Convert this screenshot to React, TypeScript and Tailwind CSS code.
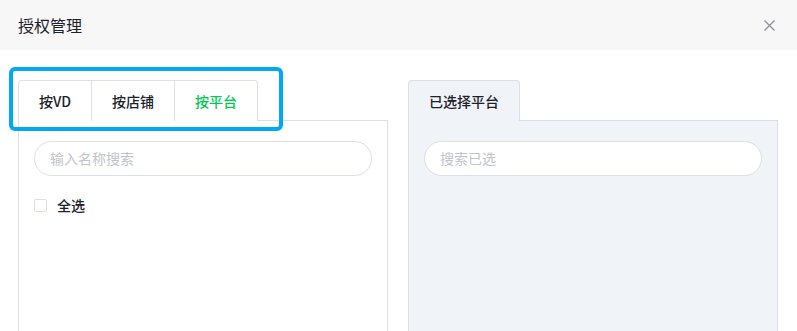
import React from "react";

export default function App() {
  const font = { fontFamily: '"Noto Sans CJK SC", "Noto Sans", sans-serif' };
  return (
    <div className="relative h-[331px] w-[797px] overflow-hidden bg-white" style={font}>
      <div className="flex h-[50px] items-center justify-between bg-[#f7f7f7] pl-[18px] pr-[22px]">
        <span className="text-[16px] text-[#1d2129]">授权管理</span>
        <svg width="11" height="11" viewBox="0 0 11 11" className="text-[#8a8f99]">
          <path d="M0.5 0.5 L10.5 10.5 M10.5 0.5 L0.5 10.5" stroke="currentColor" strokeWidth="1.2" />
        </svg>
      </div>
      <div className="flex gap-[20px] pl-[18px] pt-[30px]">
        <div className="flex w-[370px] flex-col">
          <div className="flex h-[41px]">
            <div className="flex h-[41px] items-center rounded-tl-[4px] border border-b-0 border-[#dcdfe6] px-5 text-[14px] font-medium text-[#1d2129]">按VD</div>
            <div className="flex h-[41px] items-center border-t border-r border-[#dcdfe6] px-5 text-[14px] font-medium text-[#1d2129]">按店铺</div>
            <div className="flex h-[41px] items-center rounded-tr-[4px] border-t border-r border-[#dcdfe6] px-5 text-[14px] font-medium text-[#00c853]">按平台</div>
            <div className="flex-1 border-b border-[#dcdfe6]" />
          </div>
          <div className="h-[260px] border border-t-0 border-[#dcdfe6] px-[15px] pt-[20px]">
            <div className="flex h-[35px] items-center rounded-full border border-[#dcdfe6] px-[15px] text-[14px] text-[#c0c4cc]">输入名称搜索</div>
            <div className="mt-[19px] flex items-center">
              <div className="h-[13px] w-[13px] rounded-[2px] border border-[#dcdfe6] bg-white" />
              <span className="ml-[10px] text-[14px] font-medium text-[#1d2129]">全选</span>
            </div>
          </div>
        </div>
        <div className="flex w-[370px] flex-col">
          <div className="flex h-[41px]">
            <div className="flex h-[41px] items-center rounded-t-[4px] border border-b-0 border-[#dcdfe6] bg-[#f0f4f9] px-5 text-[14px] font-medium text-[#1d2129]">已选择平台</div>
            <div className="flex-1 border-b border-[#dcdfe6]" />
          </div>
          <div className="h-[260px] border border-t-0 border-[#dcdfe6] bg-[#f0f4f9] px-[15px] pt-[20px]">
            <div className="flex h-[35px] items-center rounded-full border border-[#dcdfe6] bg-white px-[15px] text-[14px] text-[#c0c4cc]">搜索已选</div>
          </div>
        </div>
      </div>
      <div className="pointer-events-none absolute left-[9px] top-[67px] h-[64px] w-[274px] rounded-[6px] border-[4px] border-[#00a8f5]" />
    </div>
  );
}
